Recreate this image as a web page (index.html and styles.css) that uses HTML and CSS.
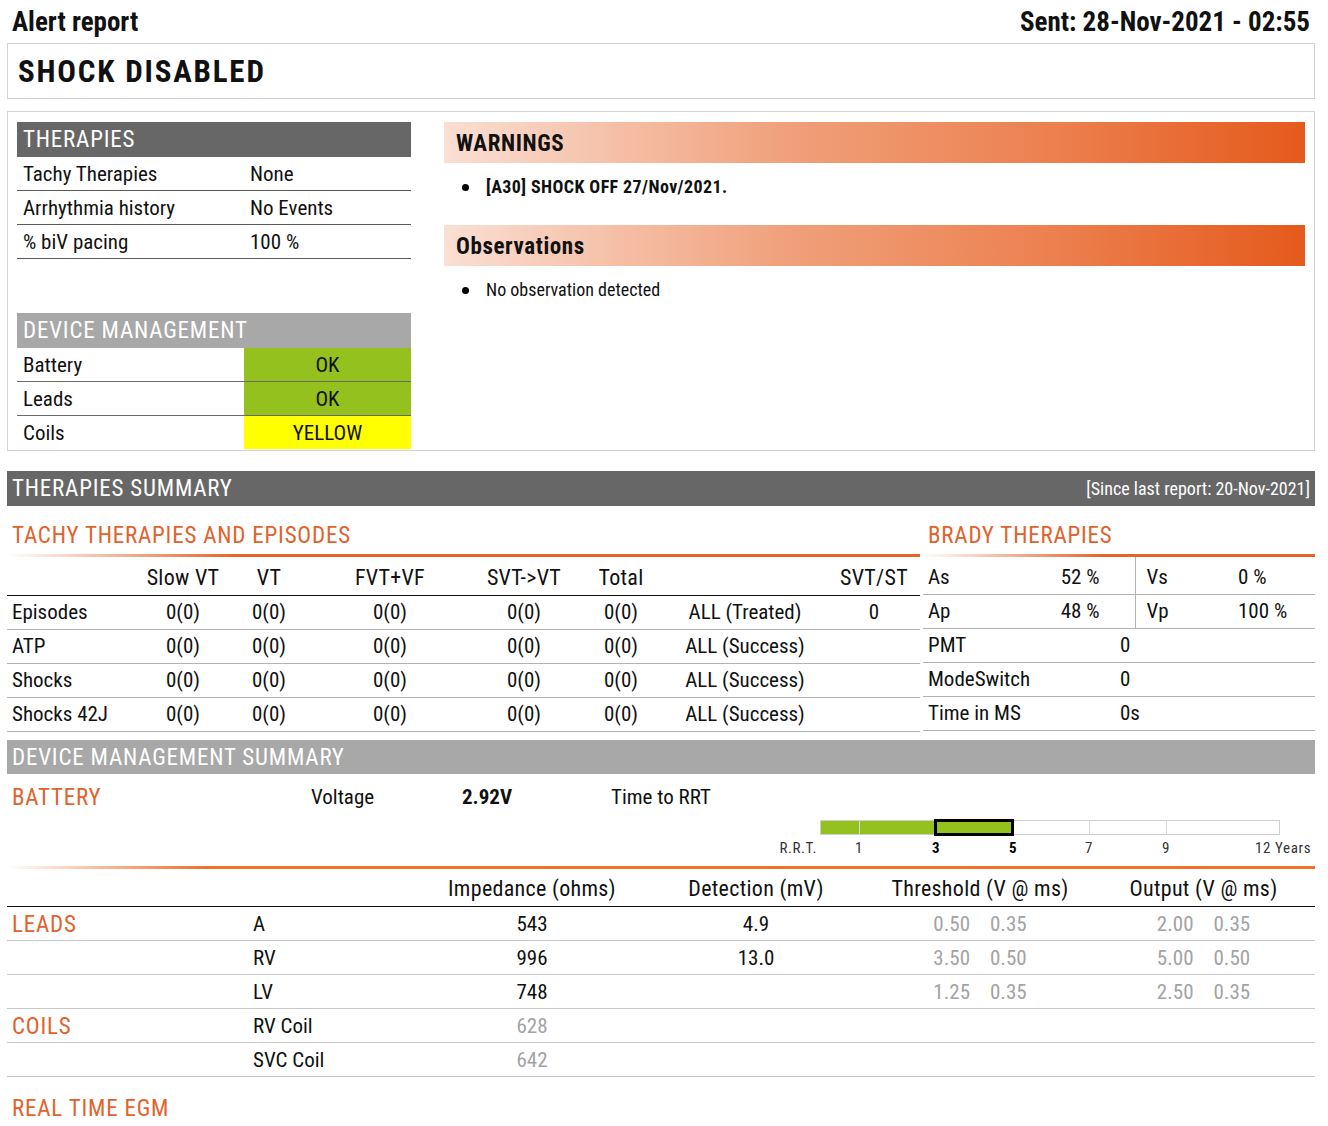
FILE: index.html
```html
<!DOCTYPE html>
<html>
<head>
<meta charset="utf-8">
<link rel="stylesheet" href="styles.css">
</head>
<body>
<div class="page">
  <div class="top">
    <div class="title">Alert report</div>
    <div class="title sent">Sent: 28-Nov-2021 - 02:55</div>
  </div>
  <div class="alertbox">SHOCK DISABLED</div>

  <div class="mainbox">
    <div class="leftcol">
      <div class="sechead dark">THERAPIES</div>
      <div class="kv"><span class="k">Tachy Therapies</span><span class="v">None</span></div>
      <div class="kv"><span class="k">Arrhythmia history</span><span class="v">No Events</span></div>
      <div class="kv"><span class="k">% biV pacing</span><span class="v">100 %</span></div>
      <div class="sechead light dm">DEVICE MANAGEMENT</div>
      <div class="kv st"><span class="k">Battery</span><span class="s green">OK</span></div>
      <div class="kv st"><span class="k">Leads</span><span class="s green">OK</span></div>
      <div class="kv st last"><span class="k">Coils</span><span class="s yellow">YELLOW</span></div>
    </div>
    <div class="rightcol">
      <div class="warnhead">WARNINGS</div>
      <ul class="blist bold"><li>[A30] SHOCK OFF 27/Nov/2021.</li></ul>
      <div class="warnhead">Observations</div>
      <ul class="blist"><li>No observation detected</li></ul>
    </div>
  </div>

  <div class="bar dark between"><span>THERAPIES SUMMARY</span><span class="since">[Since last report: 20-Nov-2021]</span></div>

  <div class="summary">
    <div class="tachy">
      <div class="orhead">TACHY THERAPIES AND EPISODES</div>
      <table class="ttab">
        <colgroup><col style="width:133px"><col style="width:86px"><col style="width:86px"><col style="width:156px"><col style="width:112px"><col style="width:82px"><col style="width:166px"><col style="width:92px"></colgroup>
        <tr class="thead"><td></td><td>Slow VT</td><td>VT</td><td>FVT+VF</td><td>SVT-&gt;VT</td><td>Total</td><td></td><td>SVT/ST</td></tr>
        <tr><td class="lbl">Episodes</td><td>0(0)</td><td>0(0)</td><td>0(0)</td><td>0(0)</td><td>0(0)</td><td>ALL (Treated)</td><td>0</td></tr>
        <tr><td class="lbl">ATP</td><td>0(0)</td><td>0(0)</td><td>0(0)</td><td>0(0)</td><td>0(0)</td><td>ALL (Success)</td><td></td></tr>
        <tr><td class="lbl">Shocks</td><td>0(0)</td><td>0(0)</td><td>0(0)</td><td>0(0)</td><td>0(0)</td><td>ALL (Success)</td><td></td></tr>
        <tr><td class="lbl">Shocks 42J</td><td>0(0)</td><td>0(0)</td><td>0(0)</td><td>0(0)</td><td>0(0)</td><td>ALL (Success)</td><td></td></tr>
      </table>
    </div>
    <div class="brady">
      <div class="orhead bh">BRADY THERAPIES</div>
      <table class="btab">
        <colgroup><col style="width:117px"><col style="width:95px"><col style="width:95px"><col style="width:85px"></colgroup>
        <tr class="r1"><td class="lbl">As</td><td class="pv">52 %</td><td class="dv">Vs</td><td class="v2">0 %</td></tr>
        <tr><td class="lbl">Ap</td><td class="pv">48 %</td><td class="dv">Vp</td><td class="v2">100 %</td></tr>
        <tr><td class="lbl">PMT</td><td colspan="3" class="sv">0</td></tr>
        <tr><td class="lbl">ModeSwitch</td><td colspan="3" class="sv">0</td></tr>
        <tr><td class="lbl">Time in MS</td><td colspan="3" class="sv">0s</td></tr>
      </table>
    </div>
  </div>

  <div class="bar light">DEVICE MANAGEMENT SUMMARY</div>

  <div class="battery">
    <div class="batrow">
      <span class="orange bat">BATTERY</span>
      <span class="volt">Voltage</span>
      <span class="vval">2.92V</span>
      <span class="rrt">Time to RRT</span>
    </div>
    <div class="gaugewrap">
      <div class="gauge">
        <div class="fill"></div>
        <div class="tick" style="left:38px"></div>
        <div class="tick" style="left:115px"></div>
        <div class="tick" style="left:192px"></div>
        <div class="tick" style="left:268px"></div>
        <div class="tick" style="left:345px"></div>
        <div class="hl"></div>
        <span class="gl rt">R.R.T.</span>
        <span class="gl" style="left:38px">1</span>
        <span class="gl b" style="left:115px">3</span>
        <span class="gl b" style="left:192px">5</span>
        <span class="gl" style="left:268px">7</span>
        <span class="gl" style="left:345px">9</span>
        <span class="gl yrs">12 Years</span>
      </div>
    </div>
  </div>

  <table class="ltab">
    <colgroup><col style="width:241px"><col style="width:182px"><col style="width:204px"><col style="width:244px"><col style="width:204px"><col style="width:233px"></colgroup>
    <tr class="thead"><td></td><td></td><td>Impedance (ohms)</td><td>Detection (mV)</td><td>Threshold (V @ ms)</td><td class="outc">Output (V @ ms)</td></tr>
    <tr><td class="orange">LEADS</td><td class="sub">A</td><td>543</td><td>4.9</td><td class="g"><span>0.50</span><span>0.35</span></td><td class="g outc"><span>2.00</span><span>0.35</span></td></tr>
    <tr><td></td><td class="sub">RV</td><td>996</td><td>13.0</td><td class="g"><span>3.50</span><span>0.50</span></td><td class="g outc"><span>5.00</span><span>0.50</span></td></tr>
    <tr><td></td><td class="sub">LV</td><td>748</td><td></td><td class="g"><span>1.25</span><span>0.35</span></td><td class="g outc"><span>2.50</span><span>0.35</span></td></tr>
    <tr><td class="orange">COILS</td><td class="sub">RV Coil</td><td class="g">628</td><td></td><td></td><td></td></tr>
    <tr><td></td><td class="sub">SVC Coil</td><td class="g">642</td><td></td><td></td><td></td></tr>
  </table>

  <div class="egm orange">REAL TIME EGM</div>
</div>
</body>
</html>
```

FILE: styles.css
```css
* { box-sizing: border-box; }
body {
  margin: 0;
  font-family: "Roboto Condensed", "Liberation Sans", Arial, sans-serif;
  color: #111;
  font-size: 21px;
  background: #fff;
}
.page { width: 1328px; padding: 0 13px 0 7px; }

.top { display: flex; justify-content: space-between; height: 43px; padding: 7px 5px 0 5px; }
.title { font-weight: bold; font-size: 27px; line-height: 30px; }

.alertbox {
  border: 1px solid #d3d3d3; height: 56px; padding: 8px 10px 0 10px;
  font-weight: bold; font-size: 31px; line-height: 40px; letter-spacing: 1.8px;
}

.mainbox {
  margin-top: 12px; border: 1px solid #d3d3d3; height: 340px;
  display: flex; padding: 10px 9px 0 9px; gap: 33px;
}
.leftcol { width: 394px; flex: none; }
.rightcol { flex: 1; }

.sechead { height: 35px; color: #fff; font-size: 23px; line-height: 36px; padding-left: 6px; letter-spacing: 0.8px; }
.dark { background: #676767; }
.light { background: #a8a8a8; }
.dm { margin-top: 54px; }

.kv { display: flex; height: 34px; border-bottom: 1px solid #5a5a5a; line-height: 34px; }
.kv .k { width: 233px; padding-left: 6px; }
.kv .v { flex: 1; }
.kv.st .k { width: 227px; }
.kv.st { border-bottom-color: #6a6a6a; }
.kv.last { border-bottom: none; height: 33px; }
.kv .s { flex: 1; text-align: center; }
.green { background: #94c11e; }
.yellow { background: #ffff00; }

.warnhead {
  height: 41px; line-height: 43px; padding-left: 12px;
  font-weight: bold; font-size: 23px; letter-spacing: 0.6px;
  background: linear-gradient(to right, #fadfd3 0%, #f0a07a 40%, #ec8150 70%, #e55a1c 100%);
}
.blist { margin: 0; padding: 0 0 0 42px; list-style: none; height: 62px; }
.blist li { position: relative; line-height: 48px; font-size: 18px; }
.blist li::before {
  content: ""; position: absolute; left: -24px; top: 21px;
  width: 7px; height: 7px; border-radius: 50%; background: #000;
}
.blist.bold li { font-weight: bold; letter-spacing: 0.4px; }

.bar {
  margin-top: 20px; height: 35px; color: #fff; font-size: 23px; line-height: 36px; padding: 0 5px; letter-spacing: 0.8px;
}
.between { display: flex; justify-content: space-between; }
.since { font-size: 18px; letter-spacing: 0; }

.summary { display: flex; gap: 3px; }
.tachy { width: 913px; flex: none; }
.brady { flex: 1; }

.orhead {
  color: #e2622b; font-size: 23px; height: 51px; padding: 15px 0 0 5px; line-height: 30px; letter-spacing: 0.8px;
  border-bottom: 3px solid transparent;
  border-image: linear-gradient(to right, #ffffff 0px, #e8622a 230px, #e8622a 100%) 1;
}
.orhead.bh {
  border-image: linear-gradient(to right, #ffffff 0px, #e8622a 180px, #e8622a 100%) 1;
}

table { border-collapse: collapse; table-layout: fixed; }
td { padding: 0; }

.ttab { width: 913px; }
.ttab td { height: 34px; text-align: center; border-bottom: 1px solid #b3b3b3; line-height: 30px; }
.ttab .thead td { height: 38px; border-bottom: 1px solid #111; padding-top: 4px; font-size: 22px; letter-spacing: 0.3px; }
.ttab td.lbl { text-align: left; padding-left: 5px; }

.btab { width: 392px; }
.btab td { height: 34px; border-bottom: 1px solid #b3b3b3; line-height: 30px; }
.btab .r1 td { height: 37px; padding-top: 3px; }
.btab .lbl { padding-left: 5px; }
.btab .pv { text-align: right; padding-right: 35px; }
.btab .dv { border-left: 1px solid #b3b3b3; padding-left: 11px; }
.btab .v2 { padding-left: 8px; }
.btab .sv { padding-left: 80px; }

.bar.light { margin-top: 8px; height: 34px; line-height: 35px; }

.battery {
  height: 95px;
  border-bottom: 3px solid transparent;
  border-image: linear-gradient(to right, #ffffff 0px, #f26e2c 200px, #f26e2c 100%) 1;
}
.batrow { display: flex; height: 45px; align-items: center; padding-top: 2px; }
.batrow .bat { width: 304px; padding-left: 5px; font-size: 23px; letter-spacing: 0.8px; }
.volt { width: 151px; }
.vval { width: 149px; font-weight: bold; }
.gaugewrap { padding-left: 813px; }
.gauge {
  position: relative; width: 460px; height: 15px; border: 1px solid #cfcfcf; margin-top: 1px;
}
.fill { position: absolute; left: 0; top: 0; bottom: 0; width: 192px; background: #94c11e; }
.tick { position: absolute; top: 0; bottom: 0; width: 1px; background: #d8d8d8; }
.hl { position: absolute; left: 113px; top: -2px; width: 80px; height: 17px; border: 3px solid #000; }
.gl { position: absolute; top: 18px; font-size: 15px; line-height: 18px; transform: translateX(-50%); color: #333; white-space: nowrap; letter-spacing: 0.6px; }
.gl.b { font-weight: bold; color: #000; }
.gl.rt { right: 462px; transform: none; }
.gl.yrs { left: 434px; transform: none; }

.orange { color: #e2622b; }

.ltab { width: 1308px; }
.ltab td { height: 34px; border-bottom: 1px solid #c8c8c8; text-align: center; line-height: 30px; }
.ltab .thead td { height: 38px; border-bottom: 1px solid #111; padding-top: 4px; font-size: 22px; letter-spacing: 0.3px; }
.ltab td.orange { text-align: left; padding-left: 5px; font-size: 23px; letter-spacing: 0.8px; padding-top: 2px; }
.ltab td.sub { text-align: left; padding-left: 5px; }
.ltab td.outc { padding-left: 10px; }
.ltab td.g { color: #a3a3a3; }
.ltab td.g span + span { margin-left: 20px; }

.egm { font-size: 23px; padding: 17px 0 0 5px; line-height: 30px; letter-spacing: 0.8px; }
```
